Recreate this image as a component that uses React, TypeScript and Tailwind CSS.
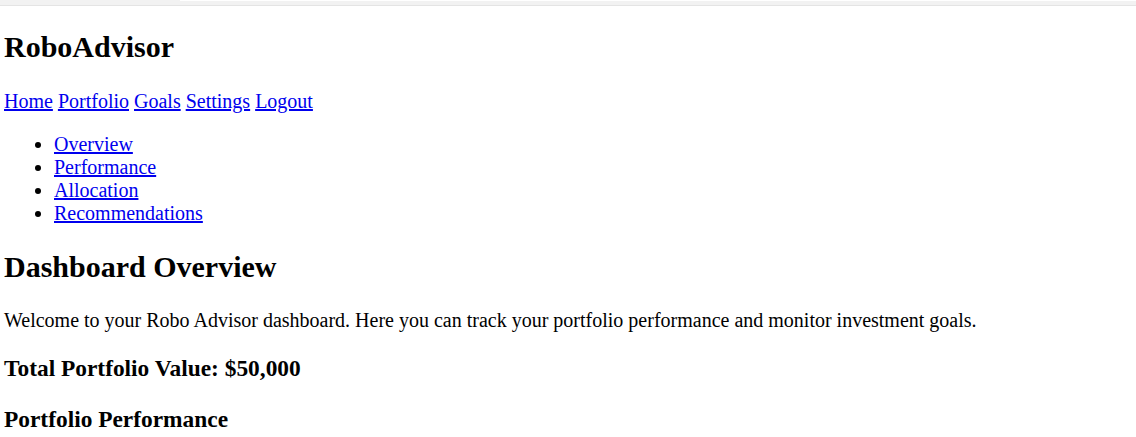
const NAV_LINKS = ['Home', 'Portfolio', 'Goals', 'Settings', 'Logout']
const SIDE_LINKS = ['Overview', 'Performance', 'Allocation', 'Recommendations']

export default function App() {
  return (
    <div className="min-h-[437px] bg-white font-['Liberation_Serif','Times_New_Roman',serif] text-[20px] leading-[23px] text-black">
      {/* thin browser chrome strip left at the top of the capture */}
      <div className="flex h-[7px]">
        <div className="h-[6px] w-[180px] border-b border-[#e4e4e4] bg-[#f2f2f2]" />
        <div className="mt-[1px] h-[5px] flex-1 border-b border-[#e4e4e4] bg-[#f2f2f2]" />
      </div>

      <div className="pl-[4px]">
        <nav>
          <h1 className="mt-[23px] mb-[25px] text-[30px] font-bold leading-[34.5px]">RoboAdvisor</h1>
          <div>
            {NAV_LINKS.map((link, i) => (
              <span key={link}>
                <a href="#" className="text-[#0000ee] underline">
                  {link}
                </a>
                {i < NAV_LINKS.length - 1 ? ' ' : null}
              </span>
            ))}
          </div>
        </nav>

        <aside>
          <ul className="mt-[20px] list-disc pl-[50px]">
            {SIDE_LINKS.map((link) => (
              <li key={link}>
                <a href="#" className="text-[#0000ee] underline">
                  {link}
                </a>
              </li>
            ))}
          </ul>
        </aside>

        <main>
          <h2 className="mt-[25px] text-[30px] font-bold leading-[34.5px]">Dashboard Overview</h2>
          <p className="mt-[25px]">
            Welcome to your Robo Advisor dashboard. Here you can track your portfolio performance and monitor investment
            goals.
          </p>
          <h3 className="mt-[23.4px] text-[23.4px] font-bold leading-[27px]">Total Portfolio Value: $50,000</h3>
          <h3 className="mt-[23.4px] text-[23.4px] font-bold leading-[27px]">Portfolio Performance</h3>
        </main>
      </div>
    </div>
  )
}
